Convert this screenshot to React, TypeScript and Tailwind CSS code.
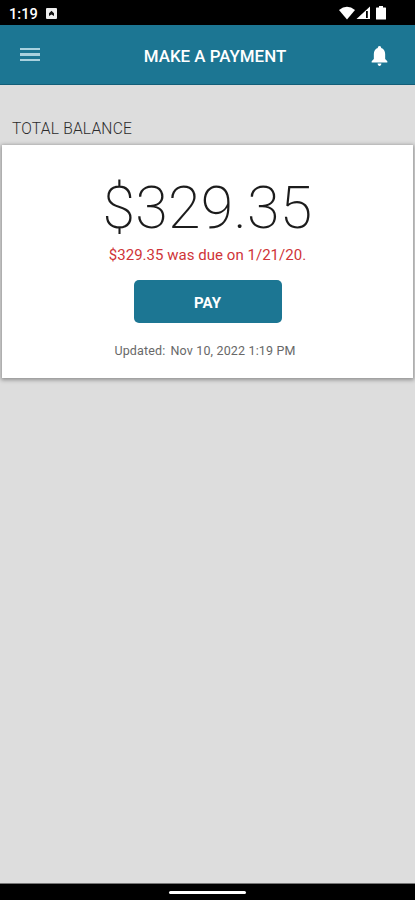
function StatusBar() {
  return (
    <div className="flex h-[25px] shrink-0 items-center justify-between bg-black pt-[2px] pr-7 pl-[9px] text-white">
      <div className="flex items-center gap-2">
        <span className="w-[29px] pt-[2px] text-[14.6px] leading-none font-medium whitespace-nowrap">1:19</span>
        <svg className="h-[11px] w-[11px]" viewBox="0 0 11 11">
          <rect width="11" height="11" rx="1" fill="#eee" />
          <path d="M3 8V5.2L5.5 2.7L8 5.2V8L5.5 6.6Z" fill="#111" />
        </svg>
      </div>
      <svg className="-mt-0.5 h-[14px] w-12" viewBox="0 0 48 14" fill="#fff">
        <path d="M0 4Q8 -2.4 16 4L8 13.5Z" />
        <path d="M31 .5V13H17.500Z" />
        <path d="M27 5H28.800V12H27Z" fill="#000" />
        <path d="M40 0H44V1.500H46.500Q47 1.500 47 2V13Q47 13.500 46.500 13.500H37.500Q37 13.500 37 13V2Q37 1.500 37.500 1.500H40Z" />
      </svg>
    </div>
  )
}

function Header() {
  return (
    <header className="grid h-[60px] shrink-0 grid-cols-[1fr_auto_1fr] items-center border-b border-[#125e78] bg-[#1c7693] pr-[27px] pl-5 text-white">
      <button aria-label="Menu" className="flex w-5 flex-col gap-[3px]">
        <span className="h-[2.5px] bg-[#a9d2df]" />
        <span className="h-[2.5px] bg-[#a9d2df]" />
        <span className="h-[2.5px] bg-[#a9d2df]" />
      </button>
      <h1 className="ml-[22px] pt-[3px] text-[16.9px] leading-none font-medium">MAKE A PAYMENT</h1>
      <button aria-label="Notifications" className="justify-self-end pt-[2px]">
        <svg className="h-5 w-[17px]" viewBox="0 0 18 20" preserveAspectRatio="none" fill="currentColor">
          <path d="M9 0C10.200 0 10.800.700 10.800 2C13.500 2.700 15 5 15 8V13L17.300 15.300V16.500H.700V15.300L3 13V8C3 5 4.500 2.700 7.200 2C7.200.700 7.800 0 9 0ZM7 17.500H11C11 20.700 7 20.700 7 17.500Z" />
        </svg>
      </button>
    </header>
  )
}

function BalanceCard() {
  return (
    <section className="mx-0.5 flex h-[233px] flex-col items-center bg-white shadow-[0_1px_4px_1px_rgba(0,0,0,0.35)]">
      <p className="mt-[33px] text-[59px] leading-[60px] font-extralight tracking-[0.3px] whitespace-nowrap text-[#1c1c1c]">
        $329.35
      </p>
      <p className="mt-[7px] text-[15px] leading-5 tracking-[0.03px] text-[#cf3438]">$329.35 was due on 1/21/20.</p>
      <button className="mt-[15px] h-[43px] w-[148px] rounded-[5px] bg-[#1c7693] pt-[3px] text-[15px] font-bold text-white">
        PAY
      </button>
      <p className="mt-5 mr-[5px] text-[12.5px] leading-4 tracking-[0.16px] text-[#686868]">
        Updated:<span className="ml-[5px]">Nov 10, 2022 1:19 PM</span>
      </p>
    </section>
  )
}

export default function App() {
  return (
    <div className="flex h-[900px] w-[415px] flex-col overflow-hidden bg-[#dddddd] font-['Roboto',sans-serif]">
      <StatusBar />
      <Header />
      <main className="flex-1">
        <h2 className="pt-[39px] pb-[11px] pl-3 text-[15.6px] leading-[10px] font-light tracking-[0.2px] text-[#2c2c2c]">
          TOTAL BALANCE
        </h2>
        <BalanceCard />
      </main>
      <footer className="flex h-[17px] shrink-0 items-center justify-center border-t border-[#777] bg-black pt-px">
        <div className="h-[3px] w-[77px] rounded-full bg-white" />
      </footer>
    </div>
  )
}
